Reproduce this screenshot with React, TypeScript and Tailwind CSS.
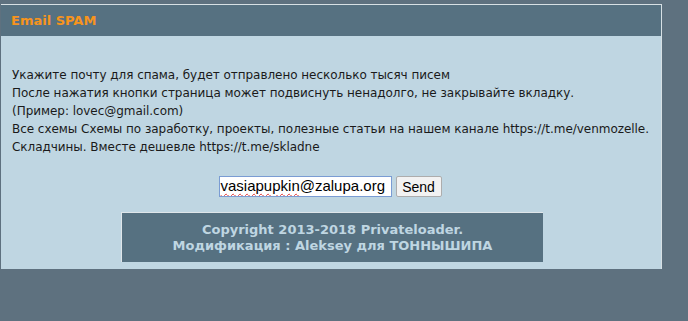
import React from "react";

export default function App() {
  return (
    <div className="w-[688px] h-[321px] bg-[#5e717f] overflow-hidden pt-[4px] pl-[1px]">
      <div className="w-[661px] h-[265px] border-t border-r border-[#d7e0e4] bg-[#bfd6e2] flex flex-col">
        <div className="h-[31px] bg-[#567181] flex items-center pl-[10px]">
          <span className="font-['DejaVu_Sans',sans-serif] font-bold text-[13px] text-[#f7941d]">Email SPAM</span>
        </div>
        <div className="pl-[11px] pt-[30px] font-['DejaVu_Sans',sans-serif] text-[12px] leading-[18px] tracking-[-0.04px] text-[#1a1a1a]">
          <div>Укажите почту для спама, будет отправлено несколько тысяч писем</div>
          <div>После нажатия кнопки страница может подвиснуть ненадолго, не закрывайте вкладку.</div>
          <div>(Пример: lovec@gmail.com)</div>
          <div>Все схемы Схемы по заработку, проекты, полезные статьи на нашем канале https://t.me/venmozelle.</div>
          <div>Складчины. Вместе дешевле https://t.me/skladne</div>
        </div>
        <div className="flex justify-center gap-[4px] mt-[20px] pr-[2px]">
          <div className="w-[173px] h-[21px] bg-white border border-[#7a9cd3] px-[1px] flex items-center font-['Liberation_Sans',sans-serif] text-[15px] text-black whitespace-nowrap overflow-hidden">
            <span className="underline decoration-wavy decoration-[#e03030] decoration-[1px] underline-offset-[2px]">vasiapupkin</span>
            <span>@zalupa.org</span>
          </div>
          <button className="w-[46px] h-[21px] bg-[#f2f2f2] border border-[#adadad] rounded-[2px] font-['Liberation_Sans',sans-serif] text-[14px] text-black">Send</button>
        </div>
        <div className="mt-[15px] ml-[120px] w-[422px] h-[50px] bg-[#567181] border-t border-l border-[#dfe6ea] flex flex-col items-center justify-center font-['DejaVu_Sans',sans-serif] font-bold text-[13px] leading-[16px] text-[#bfd6e2]">
          <div>Copyright 2013-2018 Privateloader.</div>
          <div>Модификация : Aleksey для ТОННЫШИПА</div>
        </div>
      </div>
    </div>
  );
}
